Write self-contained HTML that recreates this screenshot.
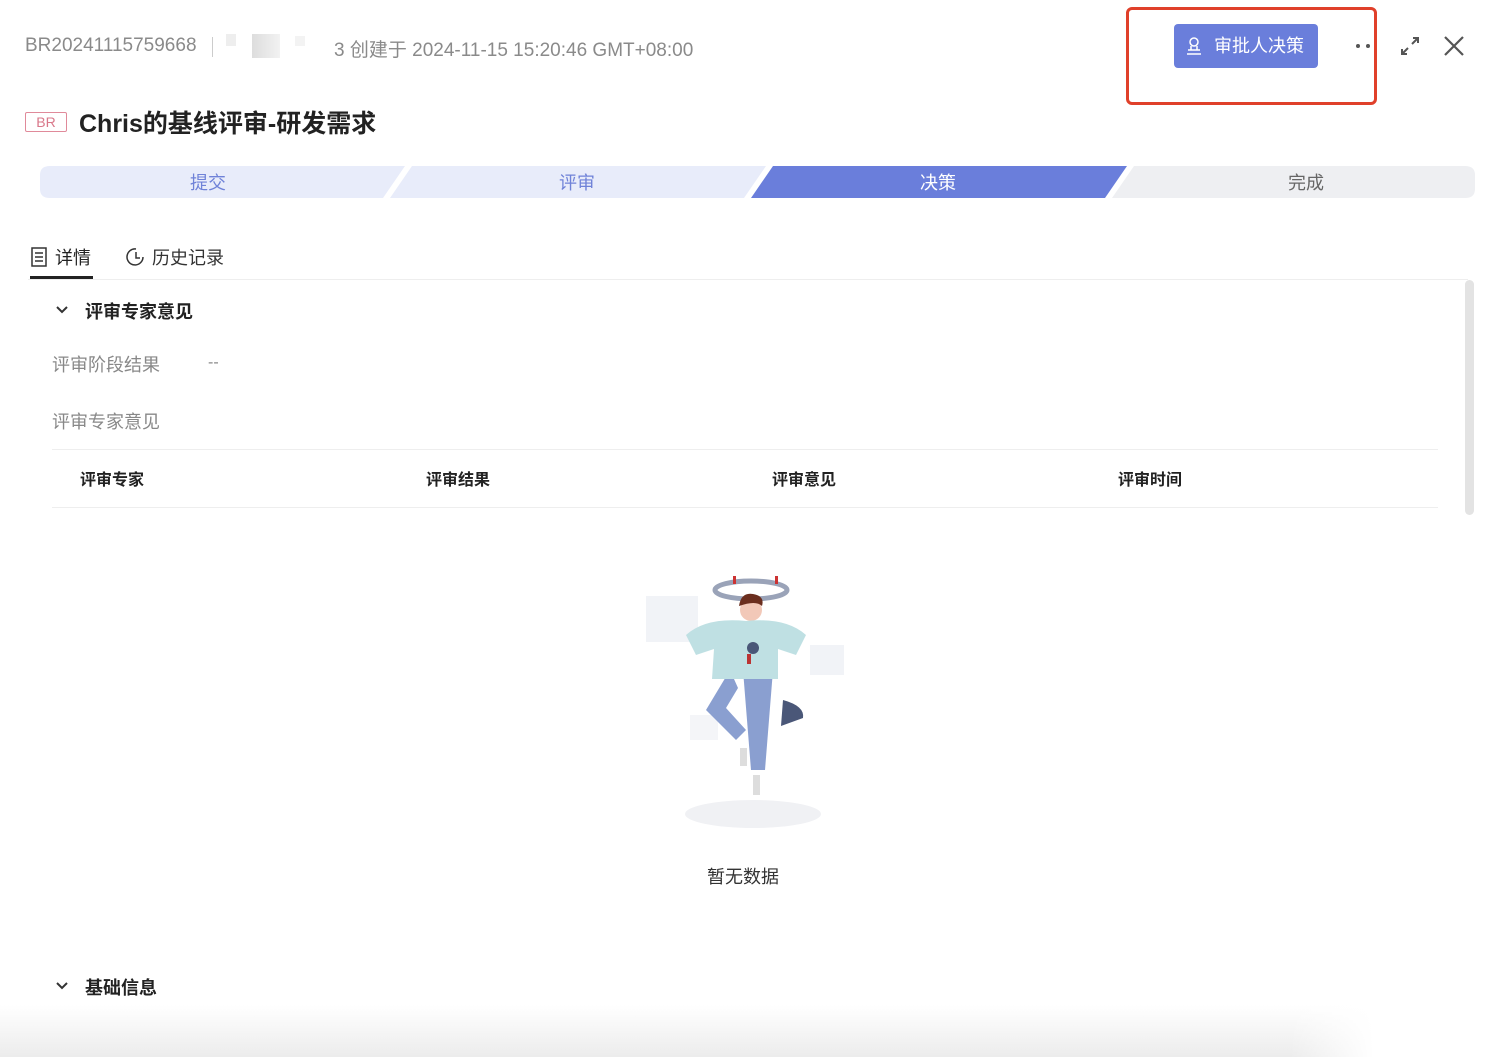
<!DOCTYPE html>
<html><head><meta charset="utf-8"><style>
*{margin:0;padding:0;box-sizing:border-box}
body{width:1500px;height:1057px;background:#fff;position:relative;overflow:hidden;font-family:"Liberation Sans","Noto Sans CJK SC",sans-serif;color:#222}
.a{position:absolute;white-space:nowrap}
</style></head><body>
<div class="a" style="left:25px;top:35px;font-size:19px;color:#8a8a8a">BR20241115759668</div>
<div class="a" style="left:212px;top:37px;width:1px;height:20px;background:#ccc"></div>
<div class="a" style="left:226px;top:34px;width:10px;height:12px;background:#eee"></div>
<div class="a" style="left:252px;top:34px;width:28px;height:24px;background:linear-gradient(90deg,#ddd,#f2f2f2)"></div>
<div class="a" style="left:295px;top:36px;width:10px;height:10px;background:#f3f3f3"></div>
<div class="a" style="left:334px;top:35px;font-size:19px;color:#8a8a8a">3 创建于 2024-11-15 15:20:46 GMT+08:00</div>

<div class="a" style="left:1126px;top:7px;width:251px;height:98px;border:3px solid #e0402a;border-radius:6px"></div>
<div class="a" style="left:1174px;top:24px;width:144px;height:44px;background:#6a7edb;border-radius:4px;color:#fff;font-size:18px;line-height:44px;padding-left:40px">审批人决策</div>
<svg class="a" style="left:1184px;top:36px" width="20" height="20" viewBox="0 0 20 20" fill="none" stroke="#fff" stroke-width="1.5"><circle cx="10" cy="6" r="4"/><path d="M4 14h12M3 18h14M7 10v4M13 10v4"/></svg>
<div class="a" style="left:1356px;top:44px;width:4px;height:4px;border-radius:2px;background:#555"></div>
<div class="a" style="left:1366px;top:44px;width:4px;height:4px;border-radius:2px;background:#555"></div>
<svg class="a" style="left:1399px;top:35px" width="22" height="22" viewBox="0 0 22 22" fill="none" stroke="#555" stroke-width="2"><path d="M13 9l6-6M14 3h5v5M9 13l-6 6M3 14v5h5"/></svg>
<svg class="a" style="left:1443px;top:35px" width="22" height="22" viewBox="0 0 22 22" stroke="#555" stroke-width="2.2"><path d="M2 2l18 18M20 2L2 20"/></svg>

<div class="a" style="left:25px;top:112px;width:42px;height:20px;border:1px solid #e08a9a;border-radius:2px;color:#d9788a;font-size:14px;line-height:18px;text-align:center">BR</div>
<div class="a" style="left:79px;top:104px;font-size:25px;font-weight:bold;color:#222">Chris的基线评审-研发需求</div>

<svg class="a" style="left:0;top:165px" width="1500" height="34">
<path d="M50 1H405L383 33H50Q40 33 40 24V10Q40 1 50 1Z" fill="#e8ecfa"/>
<polygon points="412,1 766,1 744,33 390,33" fill="#e8ecfa"/>
<polygon points="773,1 1127,1 1105,33 751,33" fill="#6a7edb"/>
<path d="M1134 1H1465Q1475 1 1475 10V24Q1475 33 1465 33H1112Z" fill="#eeeff2"/>
</svg>
<div class="a" style="left:190px;top:169px;font-size:18px;color:#6f82d8">提交</div>
<div class="a" style="left:559px;top:169px;font-size:18px;color:#6f82d8">评审</div>
<div class="a" style="left:920px;top:169px;font-size:18px;color:#fff">决策</div>
<div class="a" style="left:1288px;top:169px;font-size:18px;color:#666">完成</div>

<svg class="a" style="left:30px;top:247px" width="18" height="20" viewBox="0 0 18 20" fill="none" stroke="#333" stroke-width="1.5"><rect x="2" y="1" width="14" height="18"/><path d="M5 6h8M5 10h8M5 14h8"/></svg>
<div class="a" style="left:55px;top:244px;font-size:18px;color:#222">详情</div>
<div class="a" style="left:30px;top:276px;width:63px;height:3px;background:#222"></div>
<svg class="a" style="left:126px;top:247px" width="20" height="20" viewBox="0 0 20 20" fill="none" stroke="#333" stroke-width="1.5"><path d="M17 10A8 8 0 1 1 10 2"/><path d="M10 5v6h4"/></svg>
<div class="a" style="left:152px;top:244px;font-size:18px;color:#333">历史记录</div>
<div class="a" style="left:28px;top:279px;width:1440px;height:1px;background:#eee"></div>
<div class="a" style="left:1465px;top:280px;width:9px;height:235px;background:#e3e3e3;border-radius:5px"></div>

<svg class="a" style="left:55px;top:304px" width="14" height="12" viewBox="0 0 14 12" fill="none" stroke="#333" stroke-width="2"><path d="M2 3l5 5 5-5"/></svg>
<div class="a" style="left:85px;top:298px;font-size:18px;font-weight:bold">评审专家意见</div>
<div class="a" style="left:52px;top:351px;font-size:18px;color:#888">评审阶段结果</div>
<div class="a" style="left:208px;top:354px;font-size:16px;color:#888">--</div>
<div class="a" style="left:52px;top:408px;font-size:18px;color:#888">评审专家意见</div>
<div class="a" style="left:52px;top:449px;width:1386px;height:1px;background:#eee"></div>
<div class="a" style="left:80px;top:466px;font-size:16px;font-weight:bold">评审专家</div>
<div class="a" style="left:426px;top:466px;font-size:16px;font-weight:bold">评审结果</div>
<div class="a" style="left:772px;top:466px;font-size:16px;font-weight:bold">评审意见</div>
<div class="a" style="left:1118px;top:466px;font-size:16px;font-weight:bold">评审时间</div>
<div class="a" style="left:52px;top:507px;width:1386px;height:1px;background:#eee"></div>

<svg class="a" style="left:620px;top:560px" width="240" height="280" viewBox="0 0 240 280">
<ellipse cx="133" cy="254" rx="68" ry="14" fill="#f0f1f4"/>
<rect x="26" y="36" width="52" height="46" fill="#f1f3f7"/>
<rect x="190" y="85" width="34" height="30" fill="#f1f3f7"/>
<rect x="70" y="155" width="28" height="25" fill="#f4f5f8"/>
<ellipse cx="131" cy="30" rx="36" ry="9" fill="none" stroke="#9aa3b8" stroke-width="5"/>
<rect x="113" y="16" width="3" height="8" fill="#c33"/><rect x="155" y="16" width="3" height="8" fill="#c33"/>
<path d="M163 140q22 6 20 18l-22 8z" fill="#4a5778"/>
<path d="M110 110L86 150l30 30 10-10-20-22 12-20z" fill="#8a9fd0"/>
<path d="M123 110l30 0-8 100h-14z" fill="#8a9fd0"/>
<circle cx="131" cy="50" r="11" fill="#f2c8b8"/>
<path d="M119 46q2-14 14-12q12 2 9 12q-6-6-23 0z" fill="#6b2e1e"/>
<path d="M66 75q20-18 60-14q40-4 60 14l-10 20-18-6 0 30h-66l2-30-18 6z" fill="#bfe0e3"/>
<circle cx="133" cy="88" r="6" fill="#4a5778"/>
<rect x="127" y="94" width="4" height="10" fill="#b33"/>
<rect x="120" y="188" width="7" height="18" fill="#ddd"/><rect x="133" y="215" width="7" height="20" fill="#ddd"/>
</svg>
<div class="a" style="left:707px;top:863px;font-size:18px;color:#333">暂无数据</div>

<svg class="a" style="left:55px;top:980px" width="14" height="12" viewBox="0 0 14 12" fill="none" stroke="#333" stroke-width="2"><path d="M2 3l5 5 5-5"/></svg>
<div class="a" style="left:85px;top:974px;font-size:18px;font-weight:bold">基础信息</div>
<div class="a" style="left:0;top:1005px;width:1500px;height:52px;background:linear-gradient(#fff,#ececec)"></div>
<div class="a" style="left:1290px;top:1005px;width:210px;height:52px;background:linear-gradient(90deg,rgba(255,255,255,0),#fff 40%)"></div>
</body></html>
